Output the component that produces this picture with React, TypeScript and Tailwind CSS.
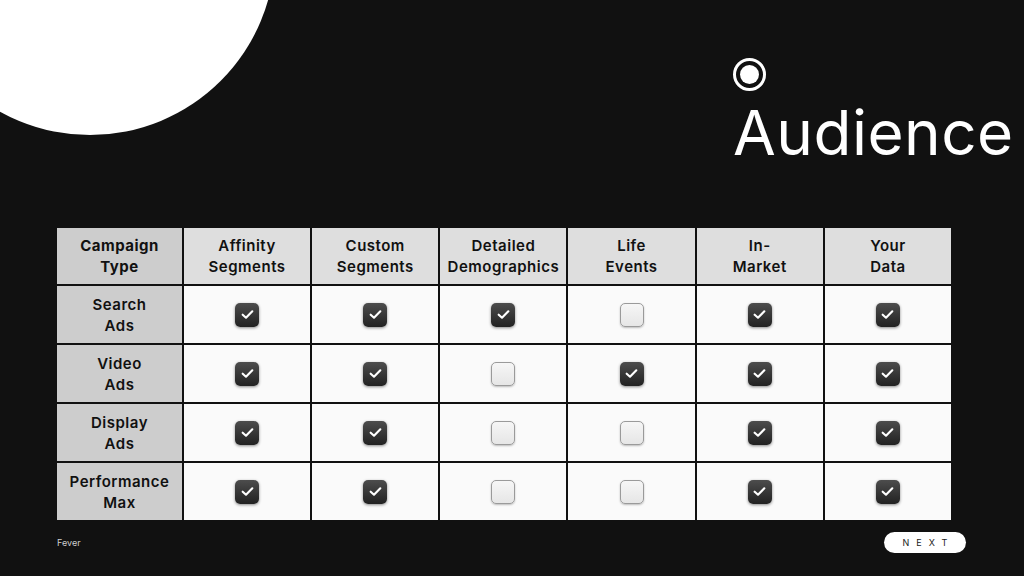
import React from 'react';

const columns = ['Affinity Segments', 'Custom Segments', 'Detailed Demographics', 'Life Events', 'In-Market', 'Your Data'];

const rows: { name: string; checks: boolean[] }[] = [
  { name: 'Search Ads', checks: [true, true, true, false, true, true] },
  { name: 'Video Ads', checks: [true, true, false, true, true, true] },
  { name: 'Display Ads', checks: [true, true, false, false, true, true] },
  { name: 'Performance Max', checks: [true, true, false, false, true, true] },
];

function Checkbox({ checked }: { checked: boolean }) {
  if (!checked) {
    return (
      <div className="w-[24px] h-[24px] rounded-[5px] border border-[#9a9a9a] bg-gradient-to-b from-[#f6f6f6] to-[#e6e6e6] shadow-[0_1px_2px_rgba(0,0,0,0.25)]" />
    );
  }
  return (
    <div className="w-[24px] h-[24px] rounded-[5px] bg-gradient-to-b from-[#4d4d4d] to-[#222] shadow-[0_1px_3px_rgba(0,0,0,0.45)] flex items-center justify-center">
      <svg width="15" height="15" viewBox="0 0 14 14" fill="none">
        <path d="M2.5 7.2 L5.6 10 L11.5 4" stroke="white" strokeWidth="2" strokeLinecap="round" strokeLinejoin="round" />
      </svg>
    </div>
  );
}

// splits "Search Ads" into two lines, "In-Market" after the hyphen
function TwoLines({ text }: { text: string }) {
  const parts = text.includes(' ') ? [text.split(' ')[0], text.split(' ').slice(1).join(' ')] : text.split(/(?<=-)/);
  return (
    <span>
      {parts[0]}
      {parts[1] && (
        <>
          <br />
          {parts[1]}
        </>
      )}
    </span>
  );
}

export default function App() {
  return (
    <div className="relative w-[1024px] h-[576px] overflow-hidden bg-[#111111] flex flex-col" style={{ fontFamily: 'Inter, "Noto Sans", sans-serif' }}>
      {/* big white circle top-left */}
      <div className="absolute left-[-95px] top-[-235px] w-[370px] h-[370px] rounded-full bg-white" />

      {/* title */}
      <div className="pl-[733px] pt-[58px] h-[228px]">
        <div className="w-[33px] h-[33px] rounded-full border-[3px] border-white flex items-center justify-center">
          <div className="w-[19px] h-[19px] rounded-full bg-white" />
        </div>
        <h1 className="mt-[11px] text-[62px] leading-none text-white font-normal tracking-[0.5px]">Audience</h1>
      </div>

      {/* table */}
      <div className="ml-[57px] w-[894px] grid grid-cols-[125px_repeat(6,1fr)] grid-rows-[56px_repeat(4,57px)] gap-[2px] bg-[#111] text-[15px] leading-[21px] tracking-[0.5px] text-[#111]">
        <div className="bg-[#cdcdcd] flex items-center justify-center text-center font-bold">
          <TwoLines text="Campaign Type" />
        </div>
        {columns.map((c) => (
          <div key={c} className="bg-[#dedede] flex items-center justify-center text-center font-semibold">
            <TwoLines text={c} />
          </div>
        ))}
        {rows.map((r) => (
          <React.Fragment key={r.name}>
            <div className="bg-[#cdcdcd] flex items-center justify-center text-center font-semibold">
              <TwoLines text={r.name} />
            </div>
            {r.checks.map((ch, i) => (
              <div key={i} className="bg-[#fafafa] flex items-center justify-center">
                <Checkbox checked={ch} />
              </div>
            ))}
          </React.Fragment>
        ))}
      </div>

      {/* footer */}
      <div className="flex items-center justify-between pl-[57px] pr-[58px] mt-[12px]">
        <span className="text-[9px] text-[#cfcfcf]">Fever</span>
        <button className="w-[82px] h-[21px] rounded-full bg-white text-[9px] tracking-[7px] pl-[7px] text-[#222] flex items-center justify-center">
          NEXT
        </button>
      </div>
    </div>
  );
}
